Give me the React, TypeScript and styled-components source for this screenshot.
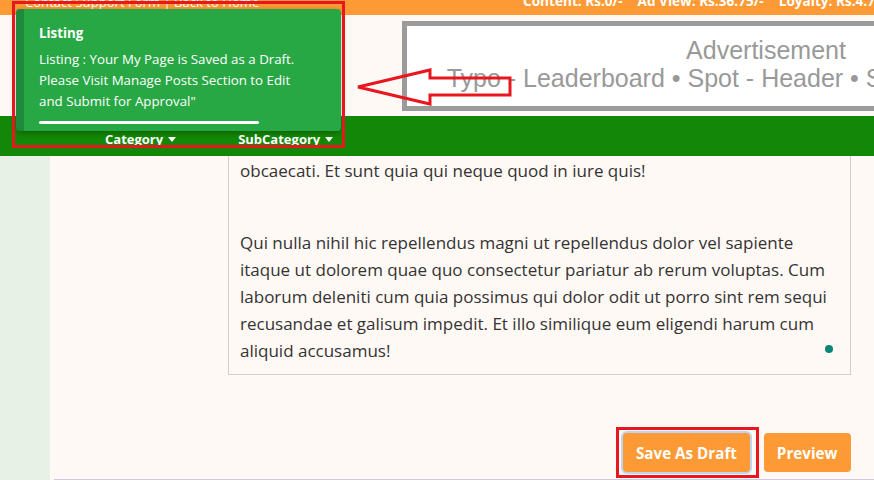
import React from "react";
import styled, { createGlobalStyle } from "styled-components";

const Global = createGlobalStyle`
  html, body { margin: 0; padding: 0; background: #fff9f5; }
  body { font-family: "Open Sans", sans-serif; }
  * { box-sizing: border-box; }
`;

const Page = styled.div`
  position: relative;
  width: 874px;
  height: 480px;
  overflow: hidden;
  background: #fff9f5;
  display: flex;
  flex-direction: column;
`;

const TopBar = styled.div`
  height: 15px;
  flex: none;
  background: #fd9a35;
  display: grid;
  grid-template-columns: 523px 1fr;
  align-items: start;
  overflow: hidden;
  color: #fff;
  line-height: 14px;
`;

const TopLinks = styled.div`
  padding-left: 25px;
  margin-top: -5px;
  font-size: 13.1px;
  white-space: nowrap;
`;

const Stats = styled.div`
  margin-top: -6px;
  display: flex;
  gap: 15px;
  font-weight: 700;
  font-size: 13.6px;
  white-space: nowrap;
`;

const Header = styled.div`
  height: 101px;
  flex: none;
  display: flex;
  align-items: flex-start;
  padding-top: 6px;
  padding-left: 402px;
  overflow: hidden;
`;

const AdBox = styled.div`
  flex: none;
  width: 728px;
  height: 90px;
  border: 5px solid #9b9b9b;
  background: #fff;
  color: #999;
  font-family: "Liberation Sans", Arial, sans-serif;
  font-size: 25px;
  line-height: 28px;
  text-align: center;
  padding-top: 10px;
  white-space: nowrap;
  overflow: hidden;
`;

const AdLine = styled.div``;

const Nav = styled.div`
  height: 40px;
  flex: none;
  background: #138808;
  display: flex;
  align-items: flex-end;
  padding-left: 105px;
  gap: 62px;
  color: #fff;
  font-weight: 700;
  font-size: 13px;
`;

const NavItem = styled.div`
  display: flex;
  align-items: center;
  gap: 5px;
  height: 20px;
  margin-bottom: 7px;
`;

const Caret = styled.span`
  width: 0;
  height: 0;
  border-left: 4px solid transparent;
  border-right: 4px solid transparent;
  border-top: 5px solid #fff;
`;

const Body = styled.div`
  flex: 1;
  display: flex;
  min-height: 0;
`;

const Sidebar = styled.div`
  width: 50px;
  flex: none;
  background: #e7f1e6;
`;

const Main = styled.div`
  flex: 1;
  display: flex;
  flex-direction: column;
  margin-left: 4px;
  border-bottom: 1px solid #cdc9df;
`;

const Editor = styled.div`
  position: relative;
  margin-left: 174px;
  width: 623px;
  border: 1px solid #cfcfcf;
  border-top: none;
  padding: 1px 11px 10px 11px;
  color: #333;
  font-size: 17px;
  line-height: 27px;
`;

const Para = styled.p<{ $gap?: number }>`
  margin: 0;
  margin-top: ${(p) => p.$gap ?? 0}px;
`;

const Dot = styled.span`
  position: absolute;
  right: 17px;
  bottom: 21px;
  width: 8px;
  height: 8px;
  border-radius: 50%;
  background: #0a8576;
`;

const Actions = styled.div`
  margin-top: 58px;
  margin-left: 569px;
  display: flex;
  gap: 14px;
`;

const Button = styled.button<{ $focused?: boolean }>`
  height: 39px;
  padding: 0 13px;
  border: none;
  border-radius: 4px;
  background: #fd9a35;
  color: #fff;
  font-family: "Open Sans", sans-serif;
  font-weight: 700;
  font-size: 15.2px;
  box-shadow: ${(p) => (p.$focused ? "0 0 0 2px #bcd6f2" : "none")};
`;

const Toast = styled.div`
  position: absolute;
  left: 16px;
  top: 9px;
  width: 325px;
  height: 122px;
  background: #28a745;
  border-left: 8px solid #1f8a3b;
  border-radius: 4px;
  box-shadow: 0 2px 6px rgba(0, 0, 0, 0.3);
  color: #fff;
  padding: 14px 20px 0 15px;
  display: flex;
  flex-direction: column;
`;

const ToastTitle = styled.div`
  font-weight: 700;
  font-size: 13.3px;
  line-height: 20px;
`;

const ToastBody = styled.div`
  margin-top: 6px;
  font-size: 13.3px;
  line-height: 21px;
`;

const Progress = styled.div`
  margin-top: 9px;
  width: 220px;
  height: 3px;
  background: #fff;
  border-radius: 2px;
`;

const Mark = styled.div<{ $x: number; $y: number; $w: number; $h: number }>`
  position: absolute;
  left: ${(p) => p.$x}px;
  top: ${(p) => p.$y}px;
  width: ${(p) => p.$w}px;
  height: ${(p) => p.$h}px;
  border: 3px solid #e8171f;
  pointer-events: none;
`;

const Arrow = styled.svg`
  position: absolute;
  left: 350px;
  top: 62px;
  pointer-events: none;
`;

export default function App() {
  return (
    <Page>
      <Global />
      <TopBar>
        <TopLinks>Contact Support Form | Back to Home</TopLinks>
        <Stats>
          <span>Content: Rs.0/-</span>
          <span>Ad View: Rs.36.75/-</span>
          <span>Loyalty: Rs.4.75/-</span>
        </Stats>
      </TopBar>
      <Header>
        <AdBox>
          <AdLine>Advertisement</AdLine>
          <AdLine>Typo - Leaderboard • Spot - Header • Size - 728px x 90px</AdLine>
        </AdBox>
      </Header>
      <Nav>
        <NavItem>
          Category <Caret />
        </NavItem>
        <NavItem>
          SubCategory <Caret />
        </NavItem>
      </Nav>
      <Body>
        <Sidebar />
        <Main>
          <Editor>
            <Para>obcaecati. Et sunt quia qui neque quod in iure quis!</Para>
            <Para $gap={45}>
              Qui nulla nihil hic repellendus magni ut repellendus dolor vel sapiente
              itaque ut dolorem quae quo consectetur pariatur ab rerum voluptas. Cum
              laborum deleniti cum quia possimus qui dolor odit ut porro sint rem sequi
              recusandae et galisum impedit. Et illo similique eum eligendi harum cum
              aliquid accusamus!
            </Para>
            <Dot />
          </Editor>
          <Actions>
            <Button $focused>Save As Draft</Button>
            <Button>Preview</Button>
          </Actions>
        </Main>
      </Body>

      <Toast>
        <ToastTitle>Listing</ToastTitle>
        <ToastBody>
          Listing : Your My Page is Saved as a Draft.
          <br />
          Please Visit Manage Posts Section to Edit
          <br />
          and Submit for Approval"
        </ToastBody>
        <Progress />
      </Toast>

      <Mark $x={12} $y={1} $w={333} $h={147} />
      <Mark $x={616} $y={427} $w={143} $h={51} />

      <Arrow width="170" height="50" viewBox="0 0 170 50">
        <polygon
          points="8,25 80,8 80,16 160,16 160,33 80,33 80,42"
          fill="none"
          stroke="#e8171f"
          strokeWidth="3"
          strokeLinejoin="miter"
        />
      </Arrow>
    </Page>
  );
}
